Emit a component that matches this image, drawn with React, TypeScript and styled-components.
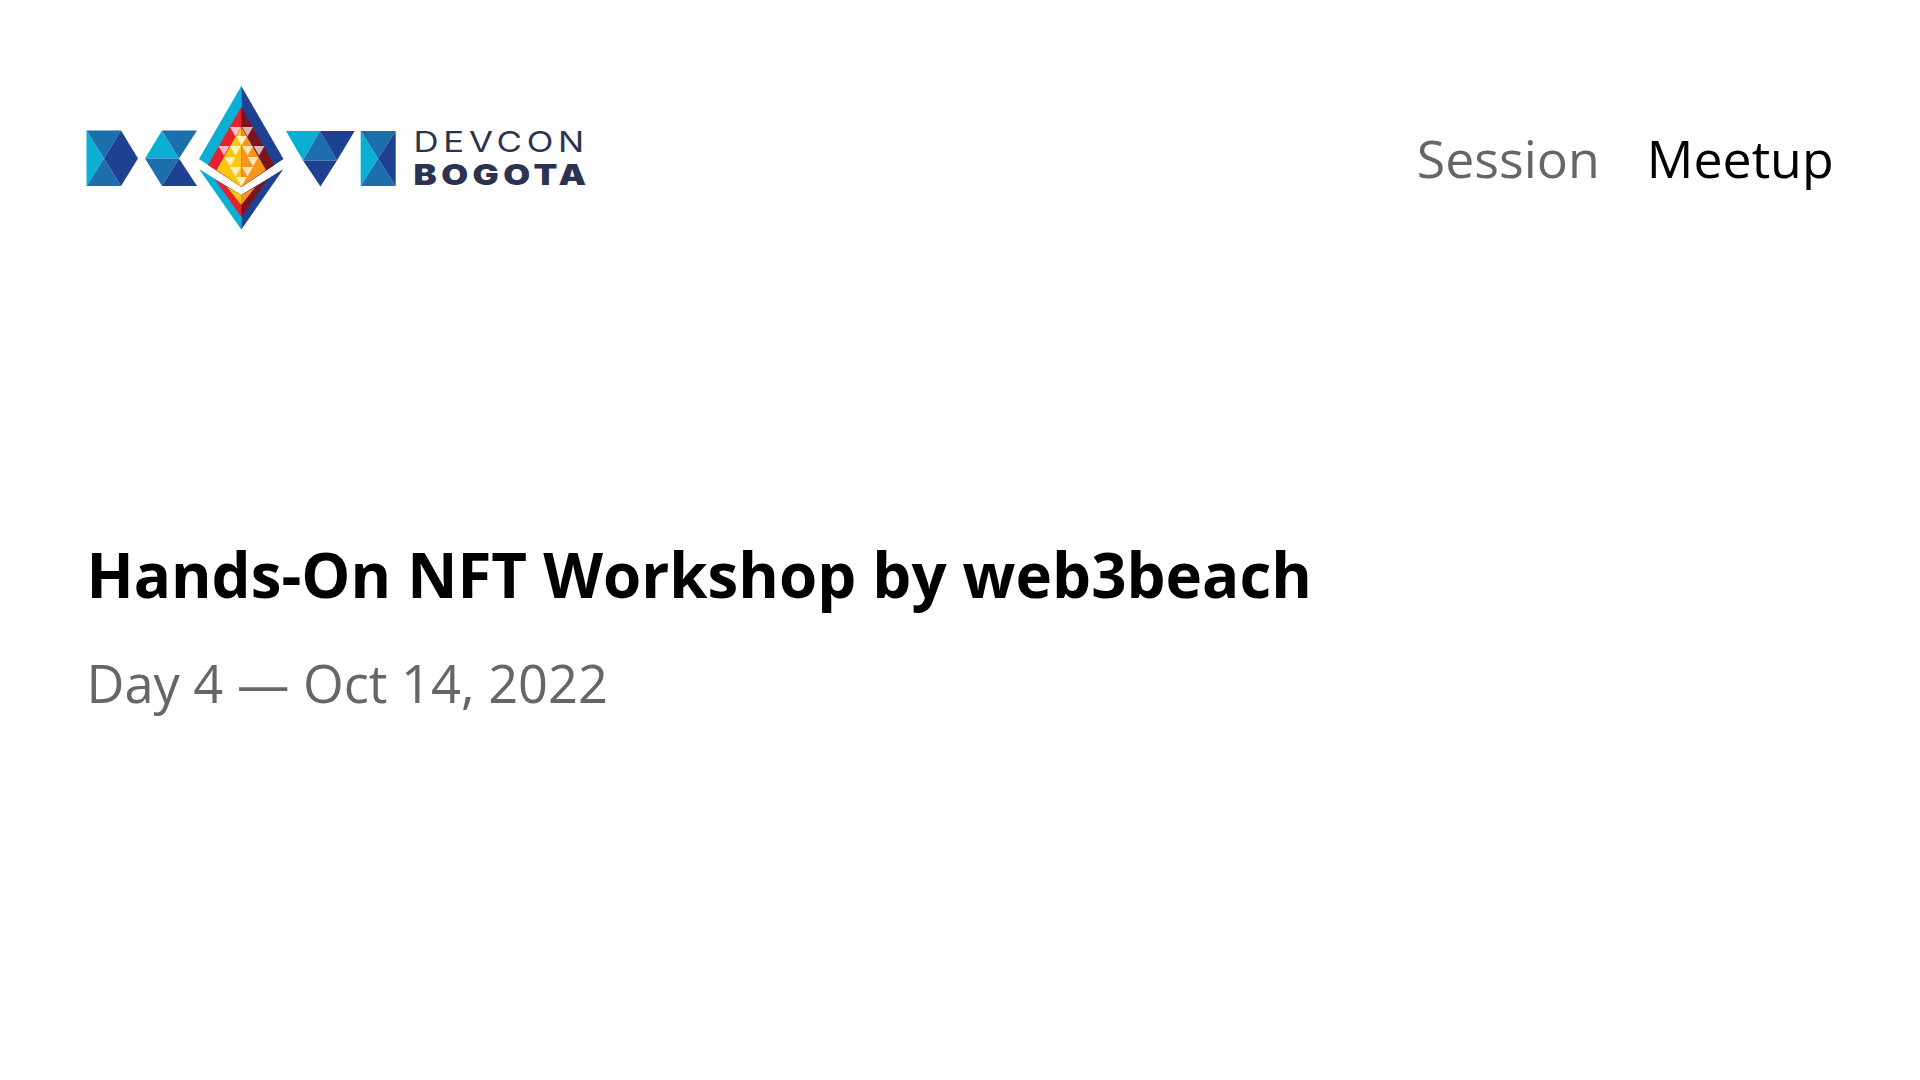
import React from 'react';
import styled, { createGlobalStyle } from 'styled-components';

const GlobalStyle = createGlobalStyle`
  html, body {
    margin: 0;
    background: #fff;
    font-family: "Open Sans", sans-serif;
  }
`;

const Page = styled.div`
  width: 1920px;
  height: 1080px;
  box-sizing: border-box;
  padding: 86px 86.4px 0;
  overflow: hidden;
`;

const Header = styled.header`
  display: flex;
  align-items: center;
  justify-content: space-between;
  height: 144px;
`;

const Nav = styled.nav`
  display: flex;
  gap: 47px;
`;

const NavItem = styled.span<{ $active?: boolean }>`
  font-size: 51.84px;
  line-height: 64px;
  color: ${props => (props.$active ? '#000' : '#666')};
`;

const Main = styled.main`
  margin-top: 304px;
`;

const Title = styled.h1`
  margin: 0;
  font-size: 61.8px;
  line-height: 80px;
  font-weight: 700;
  color: #000;
`;

const DateLine = styled.p`
  margin: 37px 0 0;
  font-size: 52.4px;
  line-height: 64px;
  color: #666;
`;

const CYAN = '#0bafd3';
const MID = '#1c6fab';
const DARK = '#1f4191';
const RED = '#e6202e';
const WINE = '#7c1420';
const YELLOW = '#fdc70f';
const ORANGE = '#f7941d';

const pale = [
  [230, 127, '#f8c6c6'], [242, 127, '#d9b5b0'], [236, 136, '#fff0c0'],
  [218.5, 146, '#f5b8bc'], [230, 146, '#fff0c0'], [242, 146, '#fde4b8'], [253.5, 146, '#dcb6b4'],
  [224.5, 157, '#fff0c0'], [247.5, 157, '#fde4b8'],
  [230, 167, '#fff0c0'], [242, 167, '#fde4b8'], [236, 177, '#fff0c0'],
] as const;

function Logo() {
  return (
    <svg width="500" height="144" viewBox="86 86 500 144">
      {/* D */}
      <polygon points="86.5,130.5 104,158.5 86.5,186" fill={CYAN} />
      <polygon points="86.5,130.5 121,130.5 104,158.5" fill={MID} />
      <polygon points="86.5,186 121,186 104,158.5" fill={MID} />
      <polygon points="121,130.5 138,158.5 121,186 104,158.5" fill={DARK} />
      {/* E */}
      <polygon points="145,158.5 162,130.5 179,158.5" fill={CYAN} />
      <polygon points="162,130.5 197,130.5 179,158.5" fill={MID} />
      <polygon points="145,158.5 179,158.5 162,186" fill={MID} />
      <polygon points="179,158.5 197,186 162,186" fill={DARK} />
      {/* diamond, upper */}
      <polygon points="241.3,86 199,159 241.3,187" fill={CYAN} />
      <polygon points="241.3,86 283.5,159 241.3,187" fill={DARK} />
      <polygon points="241.3,107 208,165 241.3,187" fill={RED} />
      <polygon points="241.3,107 274.5,165 241.3,187" fill={WINE} />
      <polygon points="241.3,127 216.5,170 241.3,187" fill={YELLOW} />
      <polygon points="241.3,127 266,170 241.3,187" fill={ORANGE} />
      {pale.map(([x, y, c], i) => (
        <polygon key={i} points={`${x},${y} ${x + 11},${y} ${x + 5.5},${y + 9.5}`} fill={c} />
      ))}
      {/* diamond, lower */}
      <polygon points="199,169 241.3,229.5 241.3,195" fill={CYAN} />
      <polygon points="283.5,169 241.3,229.5 241.3,195" fill={DARK} />
      <polygon points="215,179.5 241.3,217 241.3,195" fill={RED} />
      <polygon points="267.5,179.5 241.3,217 241.3,195" fill={WINE} />
      <polygon points="227,187 241.3,205 241.3,195" fill={YELLOW} />
      <polygon points="255.5,187 241.3,205 241.3,195" fill={ORANGE} />
      {/* V */}
      <polygon points="286,131 320,131 303,160.5" fill={CYAN} />
      <polygon points="320,131 337,160.5 303,160.5" fill={MID} />
      <polygon points="320,131 354.7,131 337,160.5" fill={DARK} />
      <polygon points="303,160.5 337,160.5 320.5,186.5" fill={DARK} />
      {/* I */}
      <polygon points="360.7,131 378,158.5 360.7,186" fill={CYAN} />
      <polygon points="360.7,131 395.7,131 378,158.5" fill={MID} />
      <polygon points="360.7,186 395.7,186 378,158.5" fill={MID} />
      <polygon points="395.7,131 395.7,186 378,158.5" fill={DARK} />
      {/* wordmark, stretched sideways for the wide logo letters */}
      <text transform="translate(413.5 152) scale(1.22 1)" fontFamily="Inter, sans-serif" fontSize="28.5" fontWeight="400" fill="#2c3350" textLength="140" lengthAdjust="spacing">DEVCON</text>
      <text transform="translate(413.5 185) scale(1.22 1)" fontFamily="Inter, sans-serif" fontSize="28.5" fontWeight="900" fill="#2c3350" textLength="141.5" lengthAdjust="spacing">BOGOTA</text>
    </svg>
  );
}

export default function App() {
  return (
    <>
      <GlobalStyle />
      <Page>
        <Header>
          <Logo />
          <Nav>
            <NavItem>Session</NavItem>
            <NavItem $active>Meetup</NavItem>
          </Nav>
        </Header>
        <Main>
          <Title>Hands-On NFT Workshop by web3beach</Title>
          <DateLine>Day 4 — Oct 14, 2022</DateLine>
        </Main>
      </Page>
    </>
  );
}
